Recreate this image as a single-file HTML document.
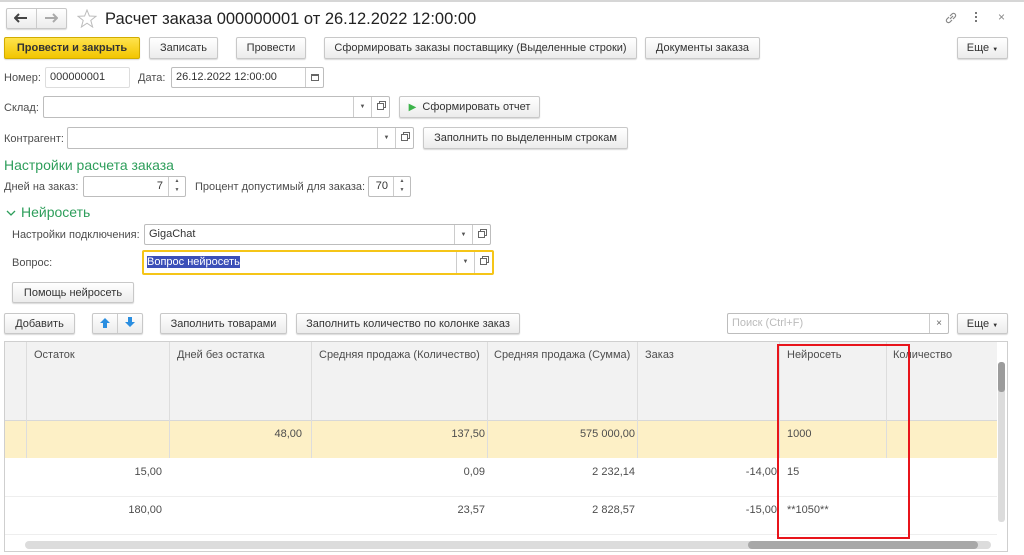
<!DOCTYPE html>
<html><head><meta charset="utf-8"><style>
*{box-sizing:border-box;margin:0;padding:0}
body{width:1024px;height:555px;background:#fff;font-family:"Liberation Sans",Arial,sans-serif;font-size:11px;color:#4d4d4d;position:relative;overflow:hidden}
.a{position:absolute}
.btn{position:absolute;border:1px solid #c8c8c8;border-radius:2px;background:linear-gradient(#fff,#ececec);box-shadow:0 1px 1px rgba(0,0,0,.15);color:#333;text-align:center;line-height:20px;white-space:nowrap}
.inp{position:absolute;border:1px solid #bdbdbd;border-radius:2px;background:#fff;color:#333;line-height:19px;padding-left:4px;white-space:nowrap}
.lbl{position:absolute;color:#4d4d4d;white-space:nowrap}
.dd{position:absolute;top:0;bottom:0;width:18px;border-left:1px solid #ccc;text-align:center;font-size:6px;line-height:20px;color:#555}
.op{position:absolute;top:0;bottom:0;right:0;width:18px;border-left:1px solid #ccc}
.op:after{content:"";position:absolute;left:5px;top:6px;width:5px;height:5px;border:1px solid #666;background:#fff;box-shadow:2px -2px 0 -1px #fff,2px -2px 0 0 #666}
.sp{position:absolute;top:0;bottom:0;right:0;width:17px;border-left:1px solid #ccc;font-size:5px;line-height:9px;text-align:center;color:#555}
.green{position:absolute;color:#2e9e5b;font-size:14px}
.col{position:absolute;top:0;bottom:0;border-left:1px solid #ddd}
.cell{position:absolute;white-space:nowrap;color:#4d4d4d}
</style></head><body>
<div class="a" style="left:0;top:0;width:1024px;height:2px;background:#d6d6d6"></div>
<div class="btn" style="left:6px;top:8px;width:61px;height:21px;"></div>
<div class="a" style="left:36px;top:9px;width:1px;height:19px;background:#ccc"></div>
<svg class="a" style="left:14px;top:13px" width="14" height="10"><path d="M1 5h12M5 1L1 5l4 4" fill="none" stroke="#444" stroke-width="2"/></svg>
<svg class="a" style="left:44px;top:13px" width="14" height="10"><path d="M1 5h12M9 1l4 4-4 4" fill="none" stroke="#aaa" stroke-width="2"/></svg>
<svg class="a" style="left:77px;top:9px" width="20" height="19" viewBox="0 0 20 19"><polygon points="10,1 12.4,7 19,7.3 13.8,11.4 15.6,18 10,14.2 4.4,18 6.2,11.4 1,7.3 7.6,7" fill="none" stroke="#bbb" stroke-width="1"/></svg>
<div class="a" style="left:105px;top:8px;font-size:16.5px;color:#222;line-height:22px">Расчет заказа 000000001 от 26.12.2022 12:00:00</div>
<svg class="a" style="left:944px;top:11px" width="14" height="14" viewBox="0 0 14 14"><path d="M6 8l3-3M5 6L3 8a2 2 0 003 3l2-2M9 8l2-2a2 2 0 00-3-3L6 5" fill="none" stroke="#888" stroke-width="1.2"/></svg>
<div class="a" style="left:975px;top:12px;width:2px;height:2px;background:#777;box-shadow:0 4px #777,0 8px #777"></div>
<div class="a" style="left:998px;top:10px;color:#888;font-size:12px">×</div>
<div class="btn" style="left:4px;top:37px;width:136px;height:22px;background:linear-gradient(#ffe34d,#f2c500);border-color:#d1ac00;font-weight:bold;color:#333">Провести и закрыть</div>
<div class="btn" style="left:149px;top:37px;width:69px;height:22px">Записать</div>
<div class="btn" style="left:236px;top:37px;width:70px;height:22px">Провести</div>
<div class="btn" style="left:324px;top:37px;width:313px;height:22px">Сформировать заказы поставщику (Выделенные строки)</div>
<div class="btn" style="left:645px;top:37px;width:115px;height:22px">Документы заказа</div>
<div class="btn" style="left:957px;top:37px;width:51px;height:22px">Еще <span style="font-size:6px">▼</span></div>
<div class="lbl" style="left:4px;top:72px">Номер:</div>
<div class="inp" style="left:45px;top:67px;width:85px;height:21px;border-color:#ddd">000000001</div>
<div class="lbl" style="left:138px;top:72px">Дата:</div>
<div class="inp" style="left:171px;top:67px;width:153px;height:21px">26.12.2022 12:00:00<div class="a" style="right:0;top:0;bottom:0;width:18px;border-left:1px solid #ccc"><div class="a" style="left:5px;top:6px;width:8px;height:7px;border:1px solid #666;border-top-width:2px"></div></div></div>
<div class="lbl" style="left:4px;top:102px">Склад:</div>
<div class="inp" style="left:43px;top:96px;width:347px;height:22px"><div class="dd" style="right:18px">▼</div><div class="op"></div></div>
<div class="btn" style="left:399px;top:96px;width:141px;height:22px"><span style="color:#3cb34a;font-size:10px">▶</span>&nbsp; Сформировать отчет</div>
<div class="lbl" style="left:4px;top:133px">Контрагент:</div>
<div class="inp" style="left:67px;top:127px;width:347px;height:22px"><div class="dd" style="right:18px">▼</div><div class="op"></div></div>
<div class="btn" style="left:423px;top:127px;width:205px;height:22px">Заполнить по выделенным строкам</div>
<div class="green" style="left:4px;top:157px">Настройки расчета заказа</div>
<div class="lbl" style="left:4px;top:181px">Дней на заказ:</div>
<div class="inp" style="left:83px;top:176px;width:103px;height:21px;text-align:right;padding-right:22px">7<div class="sp">▲<br>▼</div></div>
<div class="lbl" style="left:195px;top:181px">Процент допустимый для заказа:</div>
<div class="inp" style="left:368px;top:176px;width:43px;height:21px;text-align:right;padding-right:22px">70<div class="sp">▲<br>▼</div></div>
<svg class="a" style="left:6px;top:209px" width="10" height="8"><path d="M1 2l4 4 4-4" fill="none" stroke="#2e9e5b" stroke-width="1.3"/></svg>
<div class="green" style="left:21px;top:204px">Нейросеть</div>
<div class="lbl" style="left:12px;top:229px">Настройки подключения:</div>
<div class="inp" style="left:144px;top:224px;width:347px;height:21px">GigaChat<div class="dd" style="right:18px">▼</div><div class="op"></div></div>
<div class="lbl" style="left:12px;top:257px">Вопрос:</div>
<div class="inp" style="left:142px;top:250px;width:352px;height:25px;border:2px solid #f5c518;line-height:21px;padding-left:3px"><span style="background:#3b4fb8;color:#fff">Вопрос нейросеть</span><div class="dd" style="right:18px;line-height:21px">▼</div><div class="op"></div></div>
<div class="btn" style="left:12px;top:282px;width:122px;height:21px">Помощь нейросеть</div>
<div class="btn" style="left:4px;top:313px;width:71px;height:21px">Добавить</div>
<div class="btn" style="left:92px;top:313px;width:51px;height:21px"></div>
<div class="a" style="left:117px;top:314px;width:1px;height:19px;background:#ccc"></div>
<svg class="a" style="left:99px;top:317px" width="12" height="12"><path d="M6 1L1 6h3v5h4V6h3z" fill="#2a8ee0"/></svg>
<svg class="a" style="left:124px;top:316px" width="12" height="12"><path d="M6 11L1 6h3V1h4v5h3z" fill="#2a8ee0"/></svg>
<div class="btn" style="left:160px;top:313px;width:127px;height:21px">Заполнить товарами</div>
<div class="btn" style="left:296px;top:313px;width:224px;height:21px">Заполнить количество по колонке заказ</div>
<div class="inp" style="left:727px;top:313px;width:222px;height:21px;color:#bbb">Поиск (Ctrl+F)<div class="a" style="right:0;top:0;bottom:0;width:19px;border-left:1px solid #ccc;color:#666;text-align:center;font-size:10px">×</div></div>
<div class="btn" style="left:957px;top:313px;width:51px;height:21px">Еще <span style="font-size:6px">▼</span></div>
<div class="a" style="left:4px;top:341px;width:1004px;height:211px;border:1px solid #cfcfcf;overflow:hidden">
 <div class="a" style="left:0;top:0;width:992px;height:79px;background:#f2f2f2;border-bottom:1px solid #d8d8d8"></div>
 <div class="a" style="left:0;top:79px;width:992px;height:37px;background:#fdf0c6"></div>
 <div class="a" style="left:0;top:154px;width:992px;height:1px;background:#eee"></div>
 <div class="a" style="left:0;top:192px;width:992px;height:1px;background:#eee"></div>
 <div class="col" style="left:21px;height:116px"></div><div class="col" style="left:164px;height:116px"></div><div class="col" style="left:306px;height:116px"></div><div class="col" style="left:482px;height:116px"></div><div class="col" style="left:632px;height:116px"></div><div class="col" style="left:774px;height:116px"></div><div class="col" style="left:881px;height:116px"></div>
 <div class="cell" style="left:29px;top:7px">Остаток</div>
 <div class="cell" style="left:172px;top:7px">Дней без остатка</div>
 <div class="cell" style="left:314px;top:7px">Средняя продажа (Количество)</div>
 <div class="cell" style="left:489px;top:7px">Средняя продажа (Сумма)</div>
 <div class="cell" style="left:640px;top:7px">Заказ</div>
 <div class="cell" style="left:782px;top:7px">Нейросеть</div>
 <div class="cell" style="left:888px;top:7px">Количество</div>
 <div class="cell" style="right:705px;top:86px">48,00</div>
 <div class="cell" style="right:522px;top:86px">137,50</div>
 <div class="cell" style="right:372px;top:86px">575 000,00</div>
 <div class="cell" style="left:782px;top:86px">1000</div>
 <div class="cell" style="right:845px;top:124px">15,00</div>
 <div class="cell" style="right:522px;top:124px">0,09</div>
 <div class="cell" style="right:372px;top:124px">2 232,14</div>
 <div class="cell" style="right:230px;top:124px">-14,00</div>
 <div class="cell" style="left:782px;top:124px">15</div>
 <div class="cell" style="right:845px;top:162px">180,00</div>
 <div class="cell" style="right:522px;top:162px">23,57</div>
 <div class="cell" style="right:372px;top:162px">2 828,57</div>
 <div class="cell" style="right:230px;top:162px">-15,00</div>
 <div class="cell" style="left:782px;top:162px">**1050**</div>
 <div class="a" style="left:993px;top:20px;width:7px;height:160px;background:#dcdcdc;border-radius:3px"></div>
 <div class="a" style="left:993px;top:20px;width:7px;height:30px;background:#9c9c9c;border-radius:3px"></div>
 <div class="a" style="left:20px;top:199px;width:966px;height:8px;background:#dcdcdc;border-radius:4px"></div>
 <div class="a" style="left:743px;top:199px;width:230px;height:8px;background:#a8a8a8;border-radius:4px"></div>
</div>
<div class="a" style="left:777px;top:344px;width:133px;height:195px;border:2px solid #e8141b"></div>
</body></html>
